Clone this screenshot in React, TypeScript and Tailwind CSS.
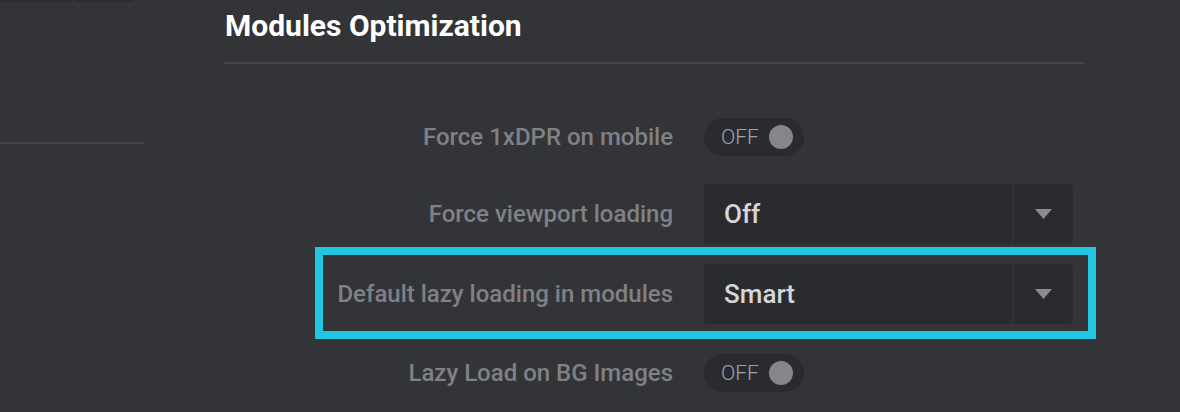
import React from 'react';

function Toggle() {
  return (
    <div className="flex h-[38px] w-[100px] items-center justify-between rounded-full bg-[#2a2b2f] pl-[17px] pr-[11px]">
      <span className="text-[21px] font-light leading-none text-[#a3a4a8]">OFF</span>
      <span className="h-[24px] w-[24px] rounded-full bg-[#85868a]" />
    </div>
  );
}

function Select({ value }: { value: string }) {
  return (
    <div className="flex h-[60px] w-[369px] overflow-hidden rounded-[4px] bg-[#2a2b2f]">
      <div className="flex flex-1 items-center pl-[20px] text-[26px] font-medium text-[#d6d6da]">{value}</div>
      <div className="flex w-[61px] items-center justify-center border-l-2 border-[#313236]">
        <svg width="17" height="10" viewBox="0 0 17 10">
          <path d="M0 0 L17 0 L8.5 10 Z" fill="#8b8c90" />
        </svg>
      </div>
    </div>
  );
}

function Label({ children }: { children: React.ReactNode }) {
  return <div className="text-right text-[24px] font-medium leading-[30px] text-[#808186]">{children}</div>;
}

export default function App() {
  return (
    <div className="flex h-[412px] w-[1180px] overflow-hidden bg-[#333438] font-[Roboto,sans-serif]">
      {/* sidebar stub */}
      <div className="w-[144px] shrink-0">
        <div className="flex h-[2px] gap-[3px]">
          <div className="w-[72px] bg-[#2c2d31]" />
          <div className="w-[58px] bg-[#2c2d31]" />
        </div>
        <div className="mt-[140px] h-[2px] bg-[#44454a]" />
      </div>

      <div className="ml-[80px] w-[860px] shrink-0">
        <h2 className="mt-[8px] pl-[1px] text-[30px] font-bold leading-[36px] text-white">Modules Optimization</h2>
        <div className="mt-[18px] h-[2px] bg-[#45464b]" />

        <div className="mt-[54px] flex items-center">
          <div className="w-[449px]">
            <Label>Force 1xDPR on mobile</Label>
          </div>
          <div className="ml-[31px]">
            <Toggle />
          </div>
        </div>

        <div className="mt-[28px] flex items-center">
          <div className="w-[449px]">
            <Label>Force viewport loading</Label>
          </div>
          <div className="ml-[31px]">
            <Select value="Off" />
          </div>
        </div>

        <div className="mr-[-12px] ml-[91px] mt-[3px] flex items-center border-8 border-[#24c5e3] pt-[9px] pb-[7px]">
          <div className="w-[350px]">
            <Label>Default lazy loading in modules</Label>
          </div>
          <div className="ml-[31px]">
            <Select value="Smart" />
          </div>
        </div>

        <div className="mt-[15px] flex items-center">
          <div className="w-[449px]">
            <Label>Lazy Load on BG Images</Label>
          </div>
          <div className="ml-[31px]">
            <Toggle />
          </div>
        </div>
      </div>
    </div>
  );
}
